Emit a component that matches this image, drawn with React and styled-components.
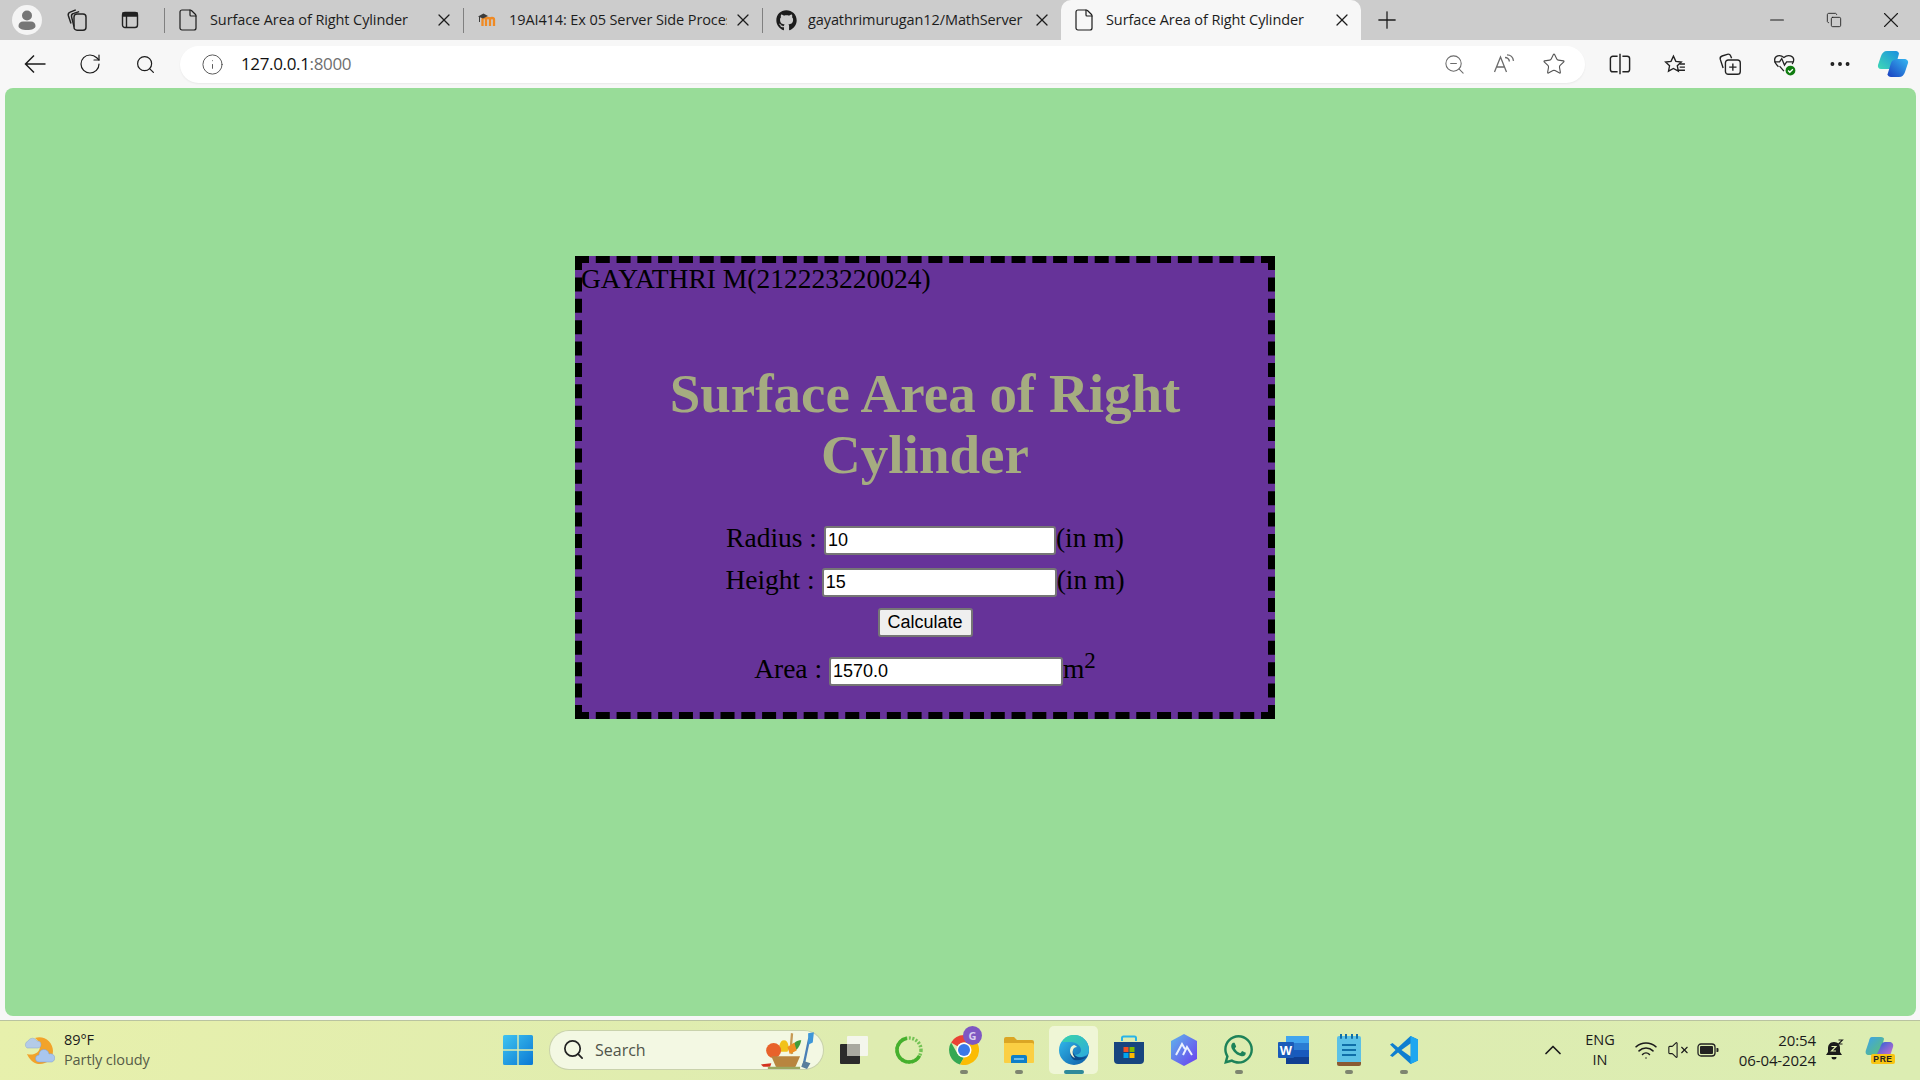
import React from 'react';
import styled, { createGlobalStyle } from 'styled-components';
import { FaGithub, FaWhatsapp } from 'react-icons/fa';
import {
  RotateCw, Search, Info, ZoomOut, Star, Plus, X, Minus, Copy, MoreHorizontal,
  ChevronUp, Wifi, VolumeX, File,
} from 'lucide-react';

const GlobalStyle = createGlobalStyle`
  html, body { margin: 0; padding: 0; overflow: hidden; }
  body { font-family: "Open Sans", "Liberation Sans", sans-serif; }
`;

const Screen = styled.div`
  width: 1920px;
  height: 1080px;
  display: flex;
  flex-direction: column;
  background: #f7f7f7;
  overflow: hidden;
`;

const TabStrip = styled.div`
  height: 40px;
  flex: none;
  display: flex;
  align-items: stretch;
  background: #cccccc;
  color: #1c1c1c;
`;

const Slot = styled.div`
  width: ${p => p.$w}px;
  flex: none;
  display: flex;
  align-items: center;
  justify-content: center;
  position: relative;
  svg { flex: none; }
`;

const Avatar = styled.div`
  width: 30px;
  height: 30px;
  border-radius: 50%;
  background: #f4f4f4;
  display: flex;
  align-items: center;
  justify-content: center;
`;

const Tabs = styled.div`
  display: flex;
  margin-left: 4px;
`;

const Tab = styled.div`
  width: ${p => (p.$active ? 300 : 299)}px;
  box-sizing: border-box;
  display: flex;
  align-items: center;
  padding: 0 9px 0 ${p => (p.$active ? 15 : 16)}px;
  position: relative;
  background: ${p => (p.$active ? '#f7f7f7' : 'transparent')};
  border-radius: ${p => (p.$active ? '10px 10px 0 0' : '0')};
  &::before {
    content: '';
    display: ${p => (p.$divider ? 'block' : 'none')};
    position: absolute;
    left: 0;
    top: 8px;
    bottom: 7px;
    width: 1px;
    background: #808080;
  }
`;

const TabIcon = styled.div`
  width: 16px;
  height: 20px;
  flex: none;
  display: flex;
  align-items: center;
  justify-content: center;
  svg { flex: none; }
`;

const TabTitle = styled.div`
  flex: 1;
  min-width: 0;
  margin: 0 6px 0 14px;
  padding-bottom: 2px;
  font-size: 14.5px;
  white-space: nowrap;
  overflow: hidden;
  letter-spacing: -0.1px;
`;

const WindowControls = styled.div`
  display: flex;
  margin-left: auto;
  padding-right: 1px;
`;

const Toolbar = styled.div`
  height: 48px;
  flex: none;
  display: flex;
  align-items: center;
  padding-left: 8px;
  box-sizing: border-box;
  color: #1c1c1c;
`;

const AddressBar = styled.div`
  width: 1405px;
  height: 37px;
  margin-left: 7px;
  flex: none;
  box-sizing: border-box;
  display: flex;
  align-items: center;
  background: #ffffff;
  border-radius: 19px;
  padding: 0 6px 0 21px;
  box-shadow: 0 1px 2px rgba(0, 0, 0, 0.06);
`;

const Url = styled.div`
  flex: 1;
  margin-left: 17px;
  padding-bottom: 2px;
  font-size: 17px;
  letter-spacing: -0.35px;
  color: #111;
  span { color: #6f6f6f; }
`;

const ToolActions = styled.div`
  display: flex;
  margin-left: 7.5px;
`;

const Page = styled.div`
  height: 928px;
  flex: none;
  margin: 0 4px 0 5px;
  background: #98dc98;
  border-radius: 8px;
  overflow: hidden;
`;

const Card = styled.div`
  width: 700px;
  height: 463px;
  box-sizing: border-box;
  margin: 168px 0 0 570px;
  border: 7px dashed #000;
  background: #663399;
  font-family: "Liberation Serif", "Times New Roman", serif;
  color: #000;
  text-align: center;
`;

const Student = styled.div`
  font-size: 27.5px;
  line-height: 32px;
  text-align: left;
  margin-left: -1px;
`;

const Heading = styled.h1`
  margin: 68px 20px 0;
  font-size: 55px;
  line-height: 61px;
  font-weight: bold;
  color: #a5ac80;
`;

const Row = styled.div`
  font-size: 27.5px;
  height: 29px;
  line-height: 29px;
  margin-top: ${p => p.$top}px;
  white-space: nowrap;
`;

const Field = styled.input`
  width: ${p => p.$w}px;
  height: 29px;
  box-sizing: border-box;
  margin: 0;
  padding: 1px 2px;
  border: 2px solid #767676;
  border-radius: 3px;
  background: #fff;
  color: #000;
  font-family: "Liberation Sans", Arial, sans-serif;
  font-size: 18px;
  vertical-align: 1px;
  outline: none;
`;

const CalcButton = styled.button`
  width: 95px;
  height: 29px;
  box-sizing: border-box;
  padding: 0;
  border: 2px solid #767676;
  border-radius: 3px;
  background: #efefef;
  color: #000;
  font-family: "Liberation Sans", Arial, sans-serif;
  font-size: 18px;
  vertical-align: top;
`;

const Sup = styled.sup`
  font-size: 23px;
  line-height: 0;
`;

const FrameGap = styled.div`
  height: 4px;
  flex: none;
`;

const Taskbar = styled.div`
  flex: 1;
  box-sizing: border-box;
  display: flex;
  align-items: center;
  padding-bottom: 2px;
  border-top: 1px solid #b9c3a0;
  background: linear-gradient(100deg, #e7f0ac 0%, #deecb0 45%, #dcedb2 100%);
  color: #1b1b1b;
`;

const Weather = styled.div`
  width: 503px;
  flex: none;
  box-sizing: border-box;
  display: flex;
  align-items: center;
  gap: 9px;
  padding-left: 24px;
`;

const WeatherText = styled.div`
  font-size: 14.5px;
  line-height: 20px;
  letter-spacing: -0.1px;
  color: #1b1b1b;
  small { display: block; font-size: 14.5px; color: #565c48; }
`;

const SearchBox = styled.div`
  width: 273px;
  height: 38px;
  margin-left: 17px;
  flex: none;
  box-sizing: border-box;
  display: flex;
  align-items: center;
  padding: 0 6px 0 12px;
  border-radius: 19px;
  background: #f3f8e3;
  box-shadow: 0 0 0 1px #c9d2ac;
  font-size: 16px;
  color: #50544a;
`;

const SearchLabel = styled.span`
  flex: 1;
  margin-left: 10px;
`;

const Apps = styled.div`
  display: flex;
  margin-left: 3px;
  height: 48px;
`;

const AppSlot = styled.div`
  width: 55px;
  flex: none;
  height: 48px;
  position: relative;
  display: flex;
  align-items: center;
  justify-content: center;
  &::before {
    content: '';
    display: ${p => (p.$active ? 'block' : 'none')};
    position: absolute;
    left: 3px;
    right: 3px;
    top: 0;
    bottom: 0;
    background: #eff6d6;
    border-radius: 5px;
  }
  &::after {
    content: '';
    display: ${p => (p.$dot || p.$active ? 'block' : 'none')};
    position: absolute;
    bottom: 0;
    left: 50%;
    transform: translateX(-50%);
    width: ${p => (p.$active ? 20 : 8)}px;
    height: 4px;
    border-radius: 2px;
    background: ${p => (p.$active ? '#2f8a9a' : '#7e8570')};
  }
  svg { position: relative; z-index: 1; }
`;

const Badge = styled.div`
  position: absolute;
  top: 0;
  right: 9px;
  width: 19px;
  height: 19px;
  border-radius: 50%;
  background: #7e57c2;
  color: #d9cdf0;
  font-size: 11px;
  font-weight: 700;
  line-height: 19px;
  text-align: center;
  z-index: 2;
`;

const Tray = styled.div`
  margin-left: auto;
  display: flex;
  align-items: center;
  height: 100%;
`;

const Lang = styled.div`
  width: 48px;
  flex: none;
  font-size: 14.5px;
  line-height: 20px;
  text-align: center;
`;

const Clock = styled.div`
  width: 88px;
  flex: none;
  font-size: 15px;
  line-height: 20px;
  text-align: right;
  letter-spacing: -0.1px;
  white-space: nowrap;
`;

const TabClose = () => <X size={20} strokeWidth={1.5} />;

const PageIcon = () => <File size={24} strokeWidth={1.2} />;

const BackArrow = () => (
  <svg width="22" height="20" viewBox="0 0 22 20" fill="none" stroke="#1c1c1c" strokeWidth="1.5">
    <path d="M21.5 10H1.5M10 1.5 1.5 10l8.5 8.5" />
  </svg>
);

const Profile = () => (
  <svg width="20" height="22" viewBox="0 0 20 22">
    <circle cx="10" cy="6.5" r="5" fill="#767676" />
    <path d="M1.5 17c0-3 2-4.5 4.5-4.5h8c2.5 0 4.5 1.5 4.5 4.5 0 2.5-3.5 4-8.5 4S1.5 19.5 1.5 17z" fill="#767676" />
  </svg>
);

const Collections = () => (
  <svg width="24" height="24" viewBox="0 0 20 20" fill="none" stroke="#222" strokeWidth="1.2">
    <rect x="7.5" y="5" width="10" height="13.5" rx="2.5" />
    <path d="M7.5 15.5 5.5 7.5a2.5 2.5 0 0 1 1.8-3l4.5-1.5" />
    <path d="M5 13 2.8 6.5a2.5 2.5 0 0 1 1.5-3L9 1.5" />
  </svg>
);

const TabsIcon = () => (
  <svg width="18" height="18" viewBox="0 0 18 18" fill="none" stroke="#222" strokeWidth="1.4">
    <rect x="1.5" y="1.5" width="15" height="15" rx="2.5" />
    <path d="M5.5 5v11.5" />
    <path d="M2 2h14v3H2z" fill="#222" />
  </svg>
);

const Moodle = () => (
  <svg width="18" height="16" viewBox="0 0 18 16" fill="none">
    <path d="M4.5 14V7.5c0-2 3.5-2 3.5 0V14M8 7.5c0-2 4-2 4 0V14M12 7.5c0-2 4-2 4 0V14" stroke="#f08a24" strokeWidth="2.3" />
    <path d="M0 4.5 5.5 1.5 10 4 5 6.5z" fill="#3c3c3c" />
    <path d="M1.5 5v5" stroke="#3c3c3c" />
  </svg>
);

const ReadAloud = () => (
  <svg width="22" height="20" viewBox="0 0 22 20" fill="none" stroke="#6b6b6b" strokeWidth="1.3">
    <path d="M1.5 18 7.5 3l6 15M3.5 13h8" />
    <path d="M12 3.5c2.5 0 4 1.5 4.5 4M14 .8c3.5 0 6 2.5 6.5 6" />
  </svg>
);

const Split = () => (
  <svg width="24" height="24" viewBox="0 0 20 20" fill="none" stroke="#222" strokeWidth="1.2">
    <path d="M8 3.5H4a2 2 0 0 0-2 2v9a2 2 0 0 0 2 2h4M12 3.5h4a2 2 0 0 1 2 2v9a2 2 0 0 1-2 2h-4M10 1.5v17" />
  </svg>
);

const Favorites = () => (
  <svg width="22" height="21" viewBox="0 0 21 20" fill="none" stroke="#222" strokeWidth="1.3">
    <path d="m9 2 2.3 5 5.2.6-3.8 3.6 1 5.2L9 13.8l-4.7 2.6 1-5.2L1.5 7.6 6.7 7z" />
    <path d="M15 9.5h5M15 12.5h5M13 15.5h7" />
  </svg>
);

const AddCollection = () => (
  <svg width="24" height="24" viewBox="0 0 21 21" fill="none" stroke="#222" strokeWidth="1.2">
    <rect x="6.5" y="7" width="13" height="12.5" rx="2.5" />
    <path d="M13 10v6.5M9.8 13.2h6.4M4.5 14 2 6.5a2.5 2.5 0 0 1 1.6-3l4.5-1.5a2.5 2.5 0 0 1 3 1.5l.8 2" />
  </svg>
);

const Health = () => (
  <svg width="24" height="24" viewBox="0 0 22 22" fill="none">
    <path d="M5 13.5C3 11.5 1.5 9.5 1.5 7c0-3 4.5-5.5 8.5-2 4-3.5 9-1 9 2 0 1.5-.5 3-1.5 4" stroke="#222" strokeWidth="1.2" />
    <path d="M1 9h5l2-3 2.5 6 2-3h6" stroke="#222" strokeWidth="1.2" />
    <path d="m6 13 4 4.5" stroke="#222" strokeWidth="1.2" />
    <circle cx="16" cy="17" r="4.5" fill="#107c10" />
    <path d="m13.8 17 1.6 1.6 2.8-2.8" stroke="#fff" strokeWidth="1.2" fill="none" />
  </svg>
);

const CopilotEdge = () => (
  <svg width="32" height="28" viewBox="0 0 32 28">
    <defs>
      <linearGradient id="cpa" x1="0" y1="1" x2="1" y2="0">
        <stop offset="0" stopColor="#3fd9b5" />
        <stop offset="1" stopColor="#1a8fe0" />
      </linearGradient>
      <linearGradient id="cpb" x1="0" y1="1" x2="1" y2="0">
        <stop offset="0" stopColor="#1a3fc0" />
        <stop offset="1" stopColor="#35b8f2" />
      </linearGradient>
    </defs>
    <path d="M10 1h9c1.5 0 2.5 1 3 2.5L19 15c-1 3-2 4-4 4H4c-2.5 0-3.5-2-3-4l3-9c1-3 3-5 6-5z" fill="url(#cpa)" />
    <path d="M22 9h5c3 0 4.5 2 4 4l-3 9c-1 3-3 5-6 5h-8c-2 0-3-1-3.5-2.5L14 13c1-3 4-4 8-4z" fill="url(#cpb)" />
  </svg>
);

const WeatherIcon = () => (
  <svg width="31" height="32" viewBox="0 0 31 32">
    <path d="M11 4c9-3 18 4 18 13 0 8-7 14-15 13C9 29 5 25 3 20c6 2 13-1 13-8 0-3-2-6-5-8z" fill="#f2a32a" />
    <path d="M3 14a4 4 0 0 1 1-7 5 5 0 0 1 9 0 3.5 3.5 0 0 1 1 7z" fill="#b4cbe8" stroke="#8ba7cf" strokeWidth=".5" />
    <path d="M15 28a3.5 3.5 0 0 1 0-7 5 5 0 0 1 10-1 4 4 0 0 1 3 8z" fill="#a9c6ee" stroke="#7d9fd0" strokeWidth=".5" />
  </svg>
);

const WindowsLogo = () => (
  <svg width="30" height="30" viewBox="0 0 30 30">
    <defs>
      <linearGradient id="wl" x1="0" y1="0" x2="1" y2="1">
        <stop offset="0" stopColor="#3fc4f0" />
        <stop offset="1" stopColor="#0a78d4" />
      </linearGradient>
    </defs>
    <path d="M0 1.5A1.5 1.5 0 0 1 1.5 0h12.8v14.3H0zM15.7 0h12.8A1.5 1.5 0 0 1 30 1.5v12.8H15.7zM0 15.7h14.3V30H1.5A1.5 1.5 0 0 1 0 28.5zM15.7 15.7H30v12.8a1.5 1.5 0 0 1-1.5 1.5H15.7z" fill="url(#wl)" />
  </svg>
);

const Basket = () => (
  <svg width="58" height="38" viewBox="9 0 49 33">
    <path d="M47 30 52 6" stroke="#4a7fb5" strokeWidth="2" />
    <path d="M51 2l5-1-1 9-4 2z" fill="#3f97d8" />
    <path d="M47 26l6 2-3 5-5-2z" fill="#587d9c" />
    <path d="M30 8c-4 0-5 7-3 10h6c2-3 1-10-3-10z" fill="#f2c21a" />
    <circle cx="21" cy="17" r="6.5" fill="#e8622a" />
    <path d="M37 2c-1 6-1 12 0 18" stroke="#c79a55" strokeWidth="2" fill="none" />
    <path d="M36 16c2-6 5-8 9-8-1 5-3 8-7 10z" fill="#3f9c3a" />
    <path d="M33 14l6-4 2 7-6 3z" fill="#ef8f22" />
    <path d="M19 22h25l-4 9c-5 2-12 2-17 0z" fill="#b8853f" />
    <path d="M10 29l9-1-1 3h-6z" fill="#d3311f" />
    <path d="M16 32h28" stroke="#9aa85f" strokeWidth="2" />
  </svg>
);

const TaskView = () => (
  <svg width="30" height="30" viewBox="0 0 30 30">
    <rect x="1" y="9" width="20" height="20" rx="1" fill="#2b2b2b" />
    <rect x="8" y="1" width="21" height="20" rx="1" fill="#f4f6ec" />
    <rect x="8" y="9" width="13" height="12" fill="#a9a9a0" />
  </svg>
);

const RingApp = () => (
  <svg width="30" height="30" viewBox="0 0 30 30" fill="none">
    <circle cx="15" cy="15" r="12" stroke="#46b02e" strokeWidth="3.5" strokeDasharray="48 28" strokeDashoffset="-6" />
    <circle cx="15" cy="15" r="12" stroke="#46b02e" strokeWidth="3.5" strokeDasharray="2 1.5" opacity="0.7" />
  </svg>
);

const Chrome = () => (
  <svg width="30" height="30" viewBox="0 0 30 30">
    <path d="M15 0a15 15 0 0 1 13 7.5H15a7.5 7.5 0 0 0-6.5 3.75L2.1 7.5A15 15 0 0 1 15 0z" fill="#e94235" />
    <path d="M2.1 7.5 8.5 18.75A7.5 7.5 0 0 0 15 22.5L11 29.5A15 15 0 0 1 2.1 7.5z" fill="#34a853" />
    <path d="M28 7.5A15 15 0 0 1 11 29.5l6.5-11.3A7.5 7.5 0 0 0 15 7.5z" fill="#fbbc04" />
    <circle cx="15" cy="15" r="7.5" fill="#fff" />
    <circle cx="15" cy="15" r="6" fill="#3b78e7" />
  </svg>
);

const Folder = () => (
  <svg width="30" height="30" viewBox="0 0 30 30">
    <path d="M0 4a2 2 0 0 1 2-2h8l3 3h15a2 2 0 0 1 2 2v4H0z" fill="#dba624" />
    <path d="M0 8h28a2 2 0 0 1 2 2v17a1 1 0 0 1-1 1H1a1 1 0 0 1-1-1z" fill="#fbcf43" />
    <path d="M7 22a2 2 0 0 1 2-2h12a2 2 0 0 1 2 2v6H7z" fill="#0f7fc8" />
    <path d="M10 24h10" stroke="#8fd0f5" strokeWidth="1.5" />
  </svg>
);

const Edge = () => (
  <svg width="30" height="30" viewBox="0 0 30 30">
    <defs>
      <linearGradient id="eg1" x1="0" y1="0" x2="1" y2="1">
        <stop offset="0" stopColor="#35c1f1" />
        <stop offset="1" stopColor="#0c59a4" />
      </linearGradient>
      <linearGradient id="eg2" x1="0" y1="0" x2="1" y2="1">
        <stop offset="0" stopColor="#3ad6a6" />
        <stop offset="1" stopColor="#2ba9e0" />
      </linearGradient>
    </defs>
    <circle cx="15" cy="15" r="15" fill="url(#eg1)" />
    <path d="M3 7C6 2 10 0 15 0c8 0 15 6 15 15 0 5-4 7-9 7-4 0-6-1-7-2 4 0 8-1 8-5 0-4-5-8-10-8-4 0-7 0-9 0z" fill="url(#eg2)" />
    <path d="M13 14c-3 3-2 8 2 11 5 1 10 0 13-4-4 2-8 2-11 0-3-2-4-5-2-8z" fill="#0a4a8a" />
    <path d="M15 10c-3 1-4 3-4 6 0 3 2 6 5 7-2-3-3-5-2-8 .5-2 2-3 4-3-1-1-2-2-3-2z" fill="#eff6d6" />
  </svg>
);

const Store = () => (
  <svg width="30" height="30" viewBox="0 0 30 30" fill="none">
    <path d="M8 6V3a1.5 1.5 0 0 1 1.5-1.5h11A1.5 1.5 0 0 1 22 3v3" stroke="#27b4e8" strokeWidth="2" />
    <path d="M0 7h30v18a4 4 0 0 1-4 4H4a4 4 0 0 1-4-4z" fill="#17457f" />
    <rect x="9.5" y="12" width="5" height="5" fill="#f25022" />
    <rect x="15.5" y="12" width="5" height="5" fill="#7fba00" />
    <rect x="9.5" y="18" width="5" height="5" fill="#00a4ef" />
    <rect x="15.5" y="18" width="5" height="5" fill="#ffb900" />
  </svg>
);

const ArcApp = () => (
  <svg width="30" height="32" viewBox="0 0 30 32" fill="none">
    <defs>
      <linearGradient id="ar" x1="0" y1="0" x2="1" y2="1">
        <stop offset="0" stopColor="#5fb6ea" />
        <stop offset="1" stopColor="#6a3df0" />
      </linearGradient>
    </defs>
    <path d="M15 0 28 7v18l-13 7-13-7V7z" fill="url(#ar)" />
    <path d="M7 21 13 10l3 5M14 21l4-8 5 8" stroke="#eaf0ff" strokeWidth="2" />
  </svg>
);

const WordApp = () => (
  <svg width="31" height="30" viewBox="0 0 31 30">
    <rect x="8" y="1" width="23" height="7" fill="#41a5ee" />
    <rect x="8" y="8" width="23" height="7" fill="#2b7cd3" />
    <rect x="8" y="15" width="23" height="7" fill="#185abd" />
    <rect x="8" y="22" width="23" height="7" fill="#103f91" />
    <rect x="0" y="7" width="16" height="16" rx="1" fill="#1a5bb8" />
    <text x="8" y="20" textAnchor="middle" fontSize="13" fontWeight="700" fontFamily="Liberation Sans, sans-serif" fill="#fff">W</text>
  </svg>
);

const Notepad = () => (
  <svg width="24" height="32" viewBox="0 0 24 32">
    <rect x="0" y="2" width="24" height="27" rx="2" fill="#5cc1e6" />
    <path d="M0 28h24v2a2 2 0 0 1-2 2H2a2 2 0 0 1-2-2z" fill="#8a5a32" />
    <path d="M5 11h14M5 16h14M5 21h14" stroke="#0f6ea8" strokeWidth="2" />
    <path d="M4 0v4M9 0v4M15 0v4M20 0v4" stroke="#0f6ea8" strokeWidth="2" strokeLinecap="round" />
  </svg>
);

const VsCode = () => (
  <svg width="30" height="30" viewBox="0 0 30 30">
    <path d="M21.5 1 29 4.5v21L21.5 29 9 17.5 3.5 22 1 20.5 6.5 15 1 9.5 3.5 8 9 12.5z" fill="#0f7fd0" />
    <path d="M21.5 1 29 4.5v21L21.5 29z" fill="#1ea7f0" />
    <path d="M21.5 8.5 12.5 15l9 6.5z" fill="#dfeeb2" />
  </svg>
);

const Battery = () => (
  <svg width="22" height="14" viewBox="0 0 22 14" fill="none">
    <rect x="1" y="1" width="17" height="12" rx="3" stroke="#222" strokeWidth="1.3" />
    <rect x="3" y="3" width="13" height="8" rx="1" fill="#222" />
    <path d="M19.5 5h1a1 1 0 0 1 1 1v2a1 1 0 0 1-1 1h-1z" fill="#222" />
  </svg>
);

const Bell = () => (
  <svg width="18" height="22" viewBox="0 0 18 22">
    <path d="M8 3c-4 0-6 3-6 6v4l-2 3h16l-2-3V9c0-3-2-6-6-6z" fill="#1b1b1b" />
    <path d="M5.5 18h5a2.500 2.500 0 0 1-5 0z" fill="#1b1b1b" />
    <path d="M5.5 7.5h4.5l-4.500 4.500H10" stroke="#e2efb0" strokeWidth="1.1" fill="none" />
    <path d="M12.5 1h4l-4 4h4" stroke="#1b1b1b" strokeWidth="1.1" fill="none" />
  </svg>
);

const CopilotPre = () => (
  <svg width="30" height="30" viewBox="0 0 30 30">
    <defs>
      <linearGradient id="pr1" x1="0" y1="0" x2="1" y2="1">
        <stop offset="0" stopColor="#3aa0f0" />
        <stop offset="1" stopColor="#62c46a" />
      </linearGradient>
      <linearGradient id="pr2" x1="0" y1="0" x2="1" y2="1">
        <stop offset="0" stopColor="#1f5fd6" />
        <stop offset="1" stopColor="#d86fd0" />
      </linearGradient>
    </defs>
    <path d="M7 2h9c2 0 3 1 3 2l-3 11c-1 3-3 5-6 5H4c-3 0-4-2-3-5l3-9c.5-2 1-4 3-4z" fill="url(#pr1)" />
    <path d="M20 7h4c3 0 5 2 4 5l-3 9H11l4-8c1-3 2-6 5-6z" fill="url(#pr2)" />
    <rect x="6" y="19" width="24" height="10" rx="2" fill="#f8c513" />
    <text x="18" y="27.2" textAnchor="middle" fontSize="8.5" fontWeight="700" fontFamily="Liberation Sans, sans-serif" letterSpacing=".6" fill="#222">PRE</text>
  </svg>
);

const tabs = [
  { title: 'Surface Area of Right Cylinder', icon: <PageIcon />, divider: true },
  { title: '19AI414: Ex 05 Server Side Processing', icon: <Moodle />, divider: true },
  { title: 'gayathrimurugan12/MathServer', icon: <FaGithub size={21} />, divider: true },
  { title: 'Surface Area of Right Cylinder', icon: <PageIcon />, active: true },
];

const apps = [
  { icon: <TaskView /> },
  { icon: <RingApp /> },
  { icon: <Chrome />, dot: true, badge: 'G' },
  { icon: <Folder />, dot: true },
  { icon: <Edge />, active: true },
  { icon: <Store /> },
  { icon: <ArcApp /> },
  { icon: <FaWhatsapp size={33} color="#1d8259" />, dot: true },
  { icon: <WordApp /> },
  { icon: <Notepad />, dot: true },
  { icon: <VsCode />, dot: true },
];

export default function App() {
  return (
    <Screen>
      <GlobalStyle />
      <TabStrip>
        <Slot $w={54}><Avatar><Profile /></Avatar></Slot>
        <Slot $w={46}><Collections /></Slot>
        <Slot $w={60}><TabsIcon /></Slot>
        <Tabs>
          {tabs.map((tab, i) => (
            <Tab key={i} $active={tab.active} $divider={tab.divider}>
              <TabIcon>{tab.icon}</TabIcon>
              <TabTitle>{tab.title}</TabTitle>
              <TabClose />
            </Tab>
          ))}
        </Tabs>
        <Slot $w={52}><Plus size={28} strokeWidth={1.1} /></Slot>
        <WindowControls>
          <Slot $w={57}><Minus size={22} strokeWidth={1.1} /></Slot>
          <Slot $w={57}><Copy size={16} strokeWidth={1.3} /></Slot>
          <Slot $w={57}><X size={26} strokeWidth={1} /></Slot>
        </WindowControls>
      </TabStrip>
      <Toolbar>
        <Slot $w={54}><BackArrow /></Slot>
        <Slot $w={56}><RotateCw size={24} strokeWidth={1.2} /></Slot>
        <Slot $w={55}><Search size={21} strokeWidth={1.4} /></Slot>
        <AddressBar>
          <Info size={23} strokeWidth={1} color="#555" />
          <Url>127.0.0.1<span>:8000</span></Url>
          <Slot $w={50}><ZoomOut size={23} strokeWidth={1.1} color="#6b6b6b" /></Slot>
          <Slot $w={50}><ReadAloud /></Slot>
          <Slot $w={50}><Star size={24} strokeWidth={1.1} color="#555" /></Slot>
        </AddressBar>
        <ToolActions>
          <Slot $w={55}><Split /></Slot>
          <Slot $w={55}><Favorites /></Slot>
          <Slot $w={55}><AddCollection /></Slot>
          <Slot $w={55}><Health /></Slot>
          <Slot $w={55}><MoreHorizontal size={26} strokeWidth={1.6} /></Slot>
          <Slot $w={51}><CopilotEdge /></Slot>
        </ToolActions>
      </Toolbar>
      <Page>
        <Card>
          <Student>GAYATHRI M(212223220024)</Student>
          <Heading>Surface Area of Right Cylinder</Heading>
          <Row $top={38}>Radius : <Field $w={232} defaultValue="10" />(in m)</Row>
          <Row $top={13}>Height : <Field $w={235} defaultValue="15" />(in m)</Row>
          <Row $top={14}><CalcButton>Calculate</CalcButton></Row>
          <Row $top={17}>Area : <Field $w={234} defaultValue="1570.0" />m<Sup>2</Sup></Row>
        </Card>
      </Page>
      <FrameGap />
      <Taskbar>
        <Weather>
          <WeatherIcon />
          <WeatherText>89°F<small>Partly cloudy</small></WeatherText>
        </Weather>
        <WindowsLogo />
        <SearchBox>
          <Search size={23} strokeWidth={1.8} color="#222" />
          <SearchLabel>Search</SearchLabel>
          <Basket />
        </SearchBox>
        <Apps>
          {apps.map((app, i) => (
            <AppSlot key={i} $active={app.active} $dot={app.dot}>
              {app.icon}
              {app.badge && <Badge>{app.badge}</Badge>}
            </AppSlot>
          ))}
        </Apps>
        <Tray>
          <Slot $w={7} />
          <Slot $w={36}><ChevronUp size={28} strokeWidth={1.5} /></Slot>
          <Slot $w={5} />
          <Lang>ENG<br />IN</Lang>
          <Slot $w={44}><Wifi size={24} strokeWidth={1.5} /></Slot>
          <Slot $w={20}><VolumeX size={22} strokeWidth={1.2} /></Slot>
          <Slot $w={40}><Battery /></Slot>
          <Clock>20:54<br />06-04-2024</Clock>
          <Slot $w={38}><Bell /></Slot>
          <Slot $w={52}><CopilotPre /></Slot>
          <Slot $w={14} />
        </Tray>
      </Taskbar>
    </Screen>
  );
}
